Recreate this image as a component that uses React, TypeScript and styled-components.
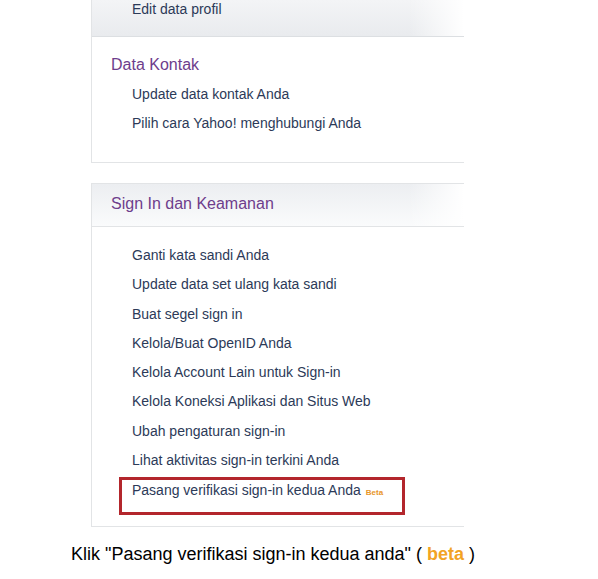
import React from 'react';
import styled, { createGlobalStyle } from 'styled-components';

const GlobalStyle = createGlobalStyle`
  body {
    margin: 0;
    background: #fff;
    font-family: "Liberation Sans", Arial, sans-serif;
  }
`;

const Page = styled.div`
  width: 598px;
  height: 579px;
  overflow: hidden;
  background: #fff;
`;

const Column = styled.div`
  margin-left: 91px;
  width: 373px;
`;

const Panel = styled.div<{ top?: boolean }>`
  border: 1px solid #e2e4e6;
  border-right: none;
  border-top: ${({ top }) => (top ? '1px solid #e2e4e6' : 'none')};
  margin-bottom: ${({ top }) => (top ? '0' : '20px')};
`;

const Shade = styled.div`
  height: 37px;
  background: linear-gradient(to right, rgba(255, 255, 255, 0) 85%, #fff 100%),
    linear-gradient(to bottom, #f3f4f6 0%, #e9ebee 100%);
  border-bottom: 1px solid #dcdfe2;
  box-sizing: border-box;
`;

const Header = styled.div`
  padding: 9px 0 11px 19px;
  line-height: 22px;
  font-size: 16px;
  color: #6e3d8c;
  background: linear-gradient(to right, rgba(255, 255, 255, 0) 85%, #fff 100%),
    linear-gradient(to bottom, #eceef1 0%, #fafbfc 100%);
  border-bottom: 1px solid #e2e4e6;
`;

const Heading = styled.div`
  margin-left: 19px;
  line-height: 22px;
  font-size: 16px;
  color: #6e3d8c;
`;

const Body = styled.div<{ pt: number; pb: number }>`
  padding: ${({ pt, pb }) => `${pt}px 0 ${pb}px 0`};
`;

const List = styled.ul<{ gap?: number }>`
  list-style: none;
  margin: ${({ gap }) => gap ?? 0}px 0 0 0;
  padding: 0 0 0 40px;
`;

const Item = styled.li<{ h?: number }>`
  font-size: 14px;
  line-height: ${({ h }) => h ?? 29.25}px;
  color: #2c3a58;
  white-space: nowrap;
`;

const Highlight = styled.li`
  margin: 1.5px 0 0 -13px;
  width: 286px;
  box-sizing: border-box;
  border: 3px solid #b3262c;
  padding: 0 0 9px 10px;
  font-size: 14px;
  line-height: 20px;
  color: #2c3a58;
  white-space: nowrap;
`;

const Tag = styled.span`
  margin-left: 5px;
  font-size: 8px;
  font-weight: bold;
  color: #e8962a;
`;

const Caption = styled.p`
  margin: 16px 0 0 71px;
  font-size: 18px;
  line-height: 22px;
  color: #000;
  white-space: nowrap;
`;

const Beta = styled.span`
  color: #f2a324;
  font-weight: bold;
`;

const signInLinks = [
  'Ganti kata sandi Anda',
  'Update data set ulang kata sandi',
  'Buat segel sign in',
  'Kelola/Buat OpenID Anda',
  'Kelola Account Lain untuk Sign-in',
  'Kelola Koneksi Aplikasi dan Situs Web',
  'Ubah pengaturan sign-in',
  'Lihat aktivitas sign-in terkini Anda',
];

export default function App() {
  return (
    <Page>
      <GlobalStyle />
      <Column>
        <Panel>
          <Shade>
            <List>
              <Item h={18}>Edit data profil</Item>
            </List>
          </Shade>
          <Body pt={17} pb={24}>
            <Heading>Data Kontak</Heading>
            <List gap={4}>
              <Item h={29}>Update data kontak Anda</Item>
              <Item h={29}>Pilih cara Yahoo! menghubungi Anda</Item>
            </List>
          </Body>
        </Panel>
        <Panel top>
          <Header>Sign In dan Keamanan</Header>
          <Body pt={14} pb={11}>
            <List>
              {signInLinks.map((t) => (
                <Item key={t}>{t}</Item>
              ))}
              <Highlight>
                Pasang verifikasi sign-in kedua Anda<Tag>Beta</Tag>
              </Highlight>
            </List>
          </Body>
        </Panel>
      </Column>
      <Caption>
        Klik "Pasang verifikasi sign-in kedua anda" ( <Beta>beta</Beta> )
      </Caption>
    </Page>
  );
}
